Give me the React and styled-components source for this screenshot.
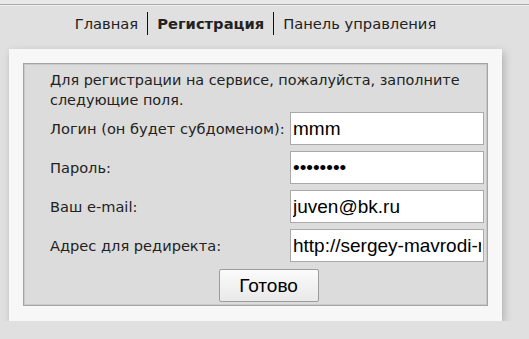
import React from "react";
import styled, { createGlobalStyle } from "styled-components";

const Global = createGlobalStyle`
  html, body { margin: 0; padding: 0; }
  body {
    background: #e0e0e0;
    font-family: "DejaVu Sans", sans-serif;
    color: #222;
  }
`;

const TopRule = styled.div`
  height: 4px;
  background: #e8e8e8;
  border-bottom: 1px solid #a9a9a9;
  box-shadow: 0 1px 0 #f2f2f2;
`;

const Page = styled.div`
  width: 493px;
  margin-left: 9px;
`;

const Nav = styled.nav`
  display: flex;
  justify-content: center;
  align-items: center;
  height: 34px;
  margin-top: 1px;
`;

const NavItem = styled.a`
  display: flex;
  align-items: center;
  height: 23px;
  padding: 0 9px;
  font-size: 14.7px;
  color: #222;
  text-decoration: none;
  font-weight: ${(p) => (p.$active ? "bold" : "normal")};
  border-left: ${(p) => (p.$first ? "none" : "1px solid #111")};
`;

const Card = styled.div`
  margin-top: 9px;
  background: #f7f7f7;
  padding: 14px 14px 15px 14px;
  box-shadow: 2px 3px 8px rgba(0, 0, 0, 0.22);
`;

const FormBox = styled.div`
  background: #dcdcdc;
  border: 1px solid #a4a4a4;
  box-shadow: inset 0 0 0 1px #c9c9c9;
  padding: 7px 3px 3px 26px;
`;

const Intro = styled.p`
  margin: 0 0 2px;
  font-size: 14.4px;
  line-height: 19.5px;
`;

const Fields = styled.div`
  display: grid;
  grid-template-columns: 1fr 194px;
  grid-auto-rows: 33px;
  row-gap: 6px;
  align-items: center;
`;

const Label = styled.label`
  font-size: 14.6px;
  white-space: nowrap;
`;

const Input = styled.input`
  box-sizing: border-box;
  width: 194px;
  height: 33px;
  border: 1px solid #a9a9a9;
  background: #fff;
  padding: 0 2px;
  margin: 0;
  font-family: "Liberation Sans", Arial, sans-serif;
  font-size: 19px;
  color: #000;
  outline: none;
`;

const Actions = styled.div`
  display: flex;
  justify-content: center;
  margin-top: 7px;
`;

const Button = styled.button`
  width: 100px;
  height: 33px;
  margin-left: 3px;
  border: 1px solid #9c9c9c;
  border-radius: 2px;
  background: linear-gradient(#fbfbfb, #e9e9e9);
  font-family: "Liberation Sans", Arial, sans-serif;
  font-size: 19px;
  color: #000;
  padding: 0;
`;

const fields = [
  { label: "Логин (он будет субдоменом):", type: "text", value: "mmm" },
  { label: "Пароль:", type: "password", value: "12345678" },
  { label: "Ваш e-mail:", type: "text", value: "juven@bk.ru" },
  { label: "Адрес для редиректа:", type: "text", value: "http://sergey-mavrodi-mmm.ru" },
];

export default function App() {
  return (
    <>
      <Global />
      <TopRule />
      <Page>
        <Nav>
          <NavItem $first href="#">Главная</NavItem>
          <NavItem $active href="#">Регистрация</NavItem>
          <NavItem href="#">Панель управления</NavItem>
        </Nav>
        <Card>
          <FormBox>
            <Intro>Для регистрации на сервисе, пожалуйста, заполните следующие поля.</Intro>
            <Fields>
              {fields.map((f) => (
                <React.Fragment key={f.label}>
                  <Label>{f.label}</Label>
                  <Input type={f.type} defaultValue={f.value} readOnly />
                </React.Fragment>
              ))}
            </Fields>
            <Actions>
              <Button type="button">Готово</Button>
            </Actions>
          </FormBox>
        </Card>
      </Page>
    </>
  );
}
